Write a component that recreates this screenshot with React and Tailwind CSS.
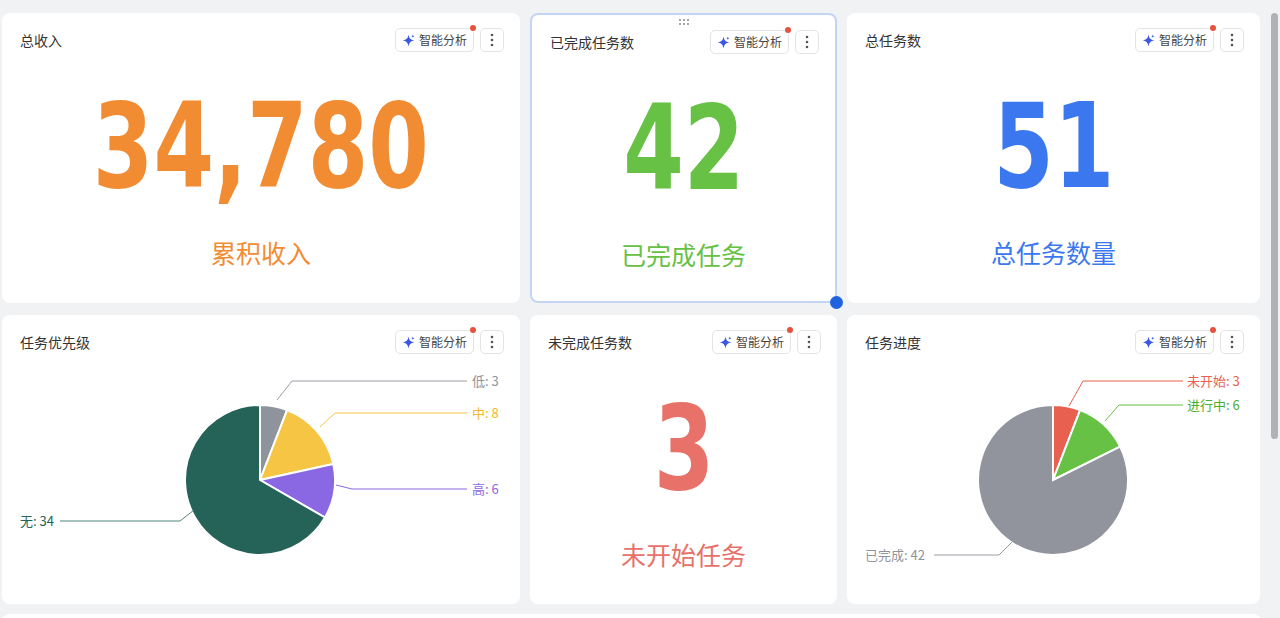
import React from "react";

const F = { fontFamily: '"Noto Sans CJK SC", "Noto Sans", sans-serif' };
const NUM = { fontFamily: '"DejaVu Sans Condensed", "DejaVu Sans", sans-serif' };

function Header({ title }) {
  return (
    <div className="flex items-center justify-between pl-[18px] pr-4 pt-[15px]">
      <div className="text-[14px] text-[#333]">{title}</div>
      <div className="flex items-center gap-[6px]">
        <div className="relative flex h-[24px] items-center gap-1 rounded-[5px] border border-[#e3e4e7] px-[6px] text-[12px] text-[#444]">
          <svg width="13" height="13" viewBox="0 0 24 24"><path d="M12 1 C13 8 16 11 23 12 C16 13 13 16 12 23 C11 16 8 13 1 12 C8 11 11 8 12 1Z" fill="#3b57e6"/><path d="M20 1 C20.4 3 21 3.6 23 4 C21 4.4 20.4 5 20 7 C19.6 5 19 4.4 17 4 C19 3.6 19.6 3 20 1Z" fill="#3b57e6"/></svg>
          智能分析
          <span className="absolute -right-[3px] -top-[4px] h-[6px] w-[6px] rounded-full bg-[#e5533f]" />
        </div>
        <div className="flex h-[24px] w-[24px] items-center justify-center rounded-[5px] border border-[#e3e4e7]">
          <svg width="4" height="14" viewBox="0 0 4 14"><circle cx="2" cy="2" r="1.3" fill="#555"/><circle cx="2" cy="7" r="1.3" fill="#555"/><circle cx="2" cy="12" r="1.3" fill="#555"/></svg>
        </div>
      </div>
    </div>
  );
}

function StatCard({ title, value, label, color, selected }) {
  return (
    <div className={`relative flex flex-col rounded-[8px] bg-white ${selected ? "border-2 border-[#c3d4f5]" : ""}`}>
      {selected && (
        <>
          <div className="absolute left-1/2 top-[4px] -translate-x-1/2 grid grid-cols-3 gap-x-[2px] gap-y-[2px]">
            {[0,1,2,3,4,5].map(i => <span key={i} className="h-[2px] w-[2px] rounded-full bg-[#888]" />)}
          </div>
          <span className="absolute -bottom-[8px] -right-[8px] h-[13px] w-[13px] rounded-full bg-[#1f63e0]" />
        </>
      )}
      <Header title={title} />
      <div className="flex flex-1 flex-col items-center">
        <div className="mt-[36px] h-[116px] flex items-center justify-center font-bold leading-none text-[118px] scale-x-[0.82]" style={{ ...NUM, color }}>{value}</div>
        <div className="mt-[30px] text-[25px]" style={{ color }}>{label}</div>
      </div>
    </div>
  );
}

function pie(cx, cy, r, data) {
  const total = data.reduce((s, d) => s + d.v, 0);
  let a = 0;
  return data.map((d, i) => {
    const a0 = a, a1 = a + (d.v / total) * Math.PI * 2;
    a = a1;
    const p = (t) => [cx + r * Math.sin(t), cy - r * Math.cos(t)];
    const [x0, y0] = p(a0), [x1, y1] = p(a1);
    const large = a1 - a0 > Math.PI ? 1 : 0;
    return <path key={i} d={`M${cx},${cy} L${x0},${y0} A${r},${r} 0 ${large} 1 ${x1},${y1} Z`} fill={d.c} stroke="#fff" strokeWidth="2" />;
  });
}

function PieCard1() {
  return (
    <div className="flex flex-col rounded-[8px] bg-white">
      <Header title="任务优先级" />
      <svg width="518" height="250" className="mt-[1px]" style={F}>
        {pie(258, 125, 75, [
          { v: 3, c: "#8f939b" }, { v: 8, c: "#f7c544" }, { v: 6, c: "#8b68e3" }, { v: 34, c: "#256257" },
        ])}
        <polyline points="275,45 290,26 465,26" fill="none" stroke="#9a9ea5" />
        <text x="470" y="31" fontSize="13" fill="#8f939b">低: 3</text>
        <polyline points="318,72 333,58 465,58" fill="none" stroke="#f7c544" />
        <text x="470" y="63" fontSize="13" fill="#f0b929">中: 8</text>
        <polyline points="334,130 350,134 465,134" fill="none" stroke="#8b68e3" />
        <text x="470" y="139" fontSize="13" fill="#8b68e3">高: 6</text>
        <polyline points="192,155 178,166 58,166" fill="none" stroke="#4f867b" />
        <text x="18" y="171" fontSize="13" fill="#256257">无: 34</text>
      </svg>
    </div>
  );
}

function PieCard2() {
  return (
    <div className="flex flex-col rounded-[8px] bg-white">
      <Header title="任务进度" />
      <svg width="413" height="250" className="mt-[1px]" style={F}>
        {pie(206, 125, 75, [
          { v: 3, c: "#e8604f" }, { v: 6, c: "#66c144" }, { v: 42, c: "#91949c" },
        ])}
        <polyline points="222,51 236,26 336,26" fill="none" stroke="#e8604f" />
        <text x="340" y="31" fontSize="13" fill="#e8604f">未开始: 3</text>
        <polyline points="258,66 272,50 336,50" fill="none" stroke="#66c144" />
        <text x="340" y="55" fontSize="13" fill="#4fae2c">进行中: 6</text>
        <polyline points="165,187 152,200 87,200" fill="none" stroke="#9a9ea5" />
        <text x="18" y="205" fontSize="13" fill="#8f939b">已完成: 42</text>
      </svg>
    </div>
  );
}

export default function App() {
  return (
    <div className="relative h-[618px] w-[1280px] overflow-hidden bg-[#f1f2f4] pl-[2px] pt-[13px]" style={F}>
      <div className="grid w-[1259px] grid-cols-[518px_307px_413px] grid-rows-[290px_289px] gap-x-[10px] gap-y-[12px]">
        <StatCard title="总收入" value="34,780" label="累积收入" color="#f28c33" />
        <StatCard title="已完成任务数" value="42" label="已完成任务" color="#66c144" selected />
        <StatCard title="总任务数" value="51" label="总任务数量" color="#3b78f0" />
        <PieCard1 />
        <StatCard title="未完成任务数" value="3" label="未开始任务" color="#e8716a" />
        <PieCard2 />
      </div>
      <div className="mt-[10px] h-[20px] w-[1259px] rounded-[8px] bg-white" />
      <div className="absolute right-[2px] top-[13px] h-[426px] w-[7px] rounded-full bg-[#b0b1b4]" />
    </div>
  );
}
